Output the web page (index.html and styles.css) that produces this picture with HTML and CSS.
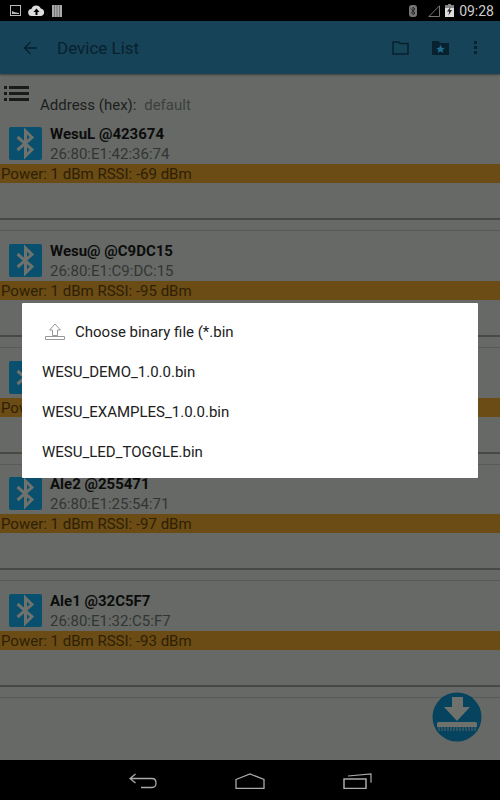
FILE: index.html
```html
<!DOCTYPE html>
<html lang="en">

<head>
    <meta name="viewport" content="width=device-width, initial-scale=1">
    <meta charset="utf-8">
    <link rel="stylesheet" href="styles.css">
</head>

<body>
    <div class="screen">
        <div class="statusbar">
            <div class="status-left">
                <svg width="11" height="12" viewBox="0 0 11 12"><rect x="0.5" y="0.5" width="10" height="10" fill="none" stroke="#bbb"/><path d="M2 9V6l2 1 2 .5 3 .5v1z" fill="#bbb"/></svg>
                <svg width="17" height="12" viewBox="0 0 17 12"><path d="M4 11a3.500 3.500 0 0 1-.6-7A5 5 0 0 1 12.800 3.500 3.800 3.800 0 0 1 13 11z" fill="#ddd"/><path d="M8.500 3.500 5.500 7H7.500V10H9.500V7H11.500z" fill="#000"/></svg>
                <svg width="10" height="12" viewBox="0 0 10 12"><path d="M0 0h10v12H0z" fill="#aaa"/><path d="M2.500 0v12M5 0v12M7.500 0v12" stroke="#666" stroke-width=".8"/></svg>
            </div>
            <div class="status-right">
                <svg width="8" height="12" viewBox="0 0 8 12"><rect width="8" height="12" rx="3" fill="#777"/><path d="M1.800 3.500 6 8 4 10V2L6 4 1.800 8.500" fill="none" stroke="#222" stroke-width=".9"/></svg>
                <svg class="signal" width="12" height="12" viewBox="0 0 12 12"><path d="M11.500 .8V11.500H.8z" fill="none" stroke="#777"/></svg>
                <svg width="9" height="13" viewBox="0 0 9 13"><path d="M3 0h3v1.500h3V13H0V1.500h3z" fill="#ddd"/><path d="M3 0h3v1.500h3V4H0V1.500h3z" fill="#888"/><path d="M5.500 3 2 7.500h2.200L3.500 11.500 7 6H4.800z" fill="#222"/></svg>
                <span class="clock">09:28</span>
            </div>
        </div>

        <div class="toolbar">
            <svg class="back" width="14" height="14" viewBox="0 0 14 14"><path d="M14 7H1.500M7.500 1 1.500 7l6 6" fill="none" stroke="#08212e" stroke-width="1.400"/></svg>
            <span class="title">Device List</span>
            <svg class="action" width="17" height="14" viewBox="0 0 17 14"><path d="M1 1h5.500l1.500 1.500h8V13H1z" fill="none" stroke="#08212e" stroke-width="1.500"/></svg>
            <svg class="action" width="17" height="14" viewBox="0 0 17 14"><path d="M0 0h6.500l2 2H17v12H0z" fill="#08212e"/><path d="M8.500 3.800 9.800 6.700l3 .2-2.300 2 .8 3-2.800-1.600-2.800 1.600.8-3-2.300-2 3-.2z" fill="#1d6a8c"/></svg>
            <div class="overflow"><i></i><i></i><i></i></div>
        </div>

        <div class="content">
            <div class="filter">
                <div class="list-icon">
                    <div><i></i><b></b></div>
                    <div><i></i><b></b></div>
                    <div><i></i><b></b></div>
                </div>
                <div class="address">
                    <span class="address-label">Address (hex):</span>
                    <span class="address-value">default</span>
                </div>
            </div>

            <div id="devices"></div>
        </div>

        <svg class="fab" width="50" height="50" viewBox="0 0 50 50">
            <circle cx="25" cy="25" r="24.500" fill="#06435f"/>
            <path d="M20 5h11v10h7L25 29 12 15h8z" fill="#6f716c"/>
            <path d="M5 31.500q0-1.500 1.500-1.500h37q1.500 0 1.500 1.500v3.500H5z" fill="#6f716c"/>
            <path d="M7 35v4M10 35v4M13 35v4M16 35v4M19 35v4M22 35v4M25 35v4M28 35v4M31 35v4M34 35v4M37 35v4M40 35v4M43 35v4" stroke="#6f716c" stroke-width=".8"/>
        </svg>

        <div class="dialog">
            <div class="dialog-head">
                <svg width="20" height="17" viewBox="0 0 20 17"><path d="M10 1 4.500 7H7.500V12.500H12.500V7H15.500z" fill="none" stroke="#999"/><path d="M.5 13.500h19v3H.5z" fill="none" stroke="#999"/></svg>
                <span>Choose binary file (*.bin</span>
            </div>
            <div class="file">WESU_DEMO_1.0.0.bin</div>
            <div class="file">WESU_EXAMPLES_1.0.0.bin</div>
            <div class="file">WESU_LED_TOGGLE.bin</div>
        </div>

        <div class="navbar">
            <svg width="28" height="16" viewBox="0 0 28 16"><path d="M6.500 1 1 5.500 6.500 10M1 5.500h22q4 0 4 4.500t-4 4.500H12" fill="none" stroke="#aaa" stroke-width="1.300"/></svg>
            <svg width="30" height="16" viewBox="0 0 30 16"><path d="M1 6.500 15 1l14 5.500v9H1z" fill="none" stroke="#aaa" stroke-width="1.300"/></svg>
            <svg width="29" height="16" viewBox="0 0 29 16"><path d="M1 6h22v9.500H1z" fill="none" stroke="#aaa" stroke-width="1.500"/><path d="M5 3 28 .8v9" fill="none" stroke="#aaa" stroke-width="1.200"/></svg>
        </div>
    </div>

    <script>
        // third row is almost all behind the dialog, only the start of its bar shows
        const devices = [
            { name: "WesuL @423674", mac: "26:80:E1:42:36:74", signal: "Power: 1 dBm RSSI: -69 dBm" },
            { name: "Wesu@ @C9DC15", mac: "26:80:E1:C9:DC:15", signal: "Power: 1 dBm RSSI: -95 dBm" },
            { name: "", mac: "", signal: "Pow" },
            { name: "Ale2 @255471", mac: "26:80:E1:25:54:71", signal: "Power: 1 dBm RSSI: -97 dBm" },
            { name: "Ale1 @32C5F7", mac: "26:80:E1:32:C5:F7", signal: "Power: 1 dBm RSSI: -93 dBm" }
        ];
        const btIcon = `<svg class="bt" width="33" height="33" viewBox="0 0 33 33"><rect width="33" height="33" rx="2" fill="#09506f"/><path d="M8.500 10 23 22.500 16.500 29V4L23 10.500 8.500 23" fill="none" stroke="#6f716c" stroke-width="3"/></svg>`;
        let html = "";
        devices.forEach(d => {
            html += `<div class="device">
                <div class="device-top">${btIcon}
                    <div class="device-text"><div class="device-name">${d.name}</div><div class="device-mac">${d.mac}</div></div>
                </div>
                <div class="signal-bar">${d.signal}</div>
            </div>`;
        });
        document.querySelector("#devices").innerHTML = html;
    </script>
</body>

</html>
```
FILE: styles.css
```css
* {
    box-sizing: border-box;
}

html,
body {
    margin: 0;
    padding: 0;
}

body {
    font-family: Roboto, "Liberation Sans", sans-serif;
}

.screen {
    position: relative;
    width: 500px;
    height: 800px;
    overflow: hidden;
    display: flex;
    flex-direction: column;
    background: #666966;
}

.statusbar {
    height: 21px;
    flex: none;
    background: #000;
    display: flex;
    justify-content: space-between;
    align-items: center;
    padding: 0 6px 0 10px;
}

.status-left,
.status-right {
    display: flex;
    align-items: center;
}

.status-left {
    gap: 7px;
}

.status-right {
    gap: 5px;
}

.signal {
    margin-left: 6px;
}

.clock {
    color: #ccc;
    font-size: 14px;
}

.toolbar {
    height: 53px;
    flex: none;
    background: #164358;
    display: flex;
    align-items: center;
    padding-left: 23px;
    box-shadow: 0 1px 2px rgba(0, 0, 0, .4);
    position: relative;
}

.title {
    font-size: 17px;
    color: #08212e;
    margin-left: 20px;
    width: 335px;
}

.back {
    flex: none;
}

.action {
    flex: none;
    margin-right: 23px;
}

.overflow {
    display: flex;
    flex-direction: column;
    gap: 2px;
    margin-left: 2px;
}

.overflow i {
    width: 3px;
    height: 3px;
    background: #08212e;
    display: block;
}

.content {
    flex: 1;
    min-height: 0;
    overflow: hidden;
}

.filter {
    height: 43px;
    display: flex;
    padding: 12px 0 0 4px;
}

.list-icon {
    display: flex;
    flex-direction: column;
    gap: 3px;
}

.list-icon div {
    display: flex;
    gap: 2px;
}

.list-icon i {
    width: 3px;
    height: 3px;
    background: #1a1a1a;
}

.list-icon b {
    width: 20px;
    height: 3px;
    background: #1a1a1a;
}

.address {
    margin: 10px 0 0 11px;
    font-size: 15px;
}

.address-label {
    color: #1e1e1e;
}

.address-value {
    color: #3d3f3d;
    margin-left: 4px;
}

.device {
    height: 116.75px;
    padding: 10px 0 0;
    position: relative;
}

.device::before {
    content: "";
    position: absolute;
    left: 0;
    right: 0;
    top: 113px;
    height: 1px;
    background: #575a57;
}

.device::after {
    content: "";
    position: absolute;
    left: 0;
    right: 0;
    top: 101px;
    height: 2px;
    background: #474945;
}

.device-top {
    display: flex;
    padding-left: 9px;
    height: 37px;
}

.bt {
    flex: none;
}

.device-text {
    margin: -1px 0 0 8px;
}

.device-name {
    font-size: 15px;
    font-weight: 700;
    color: #0c0c0c;
    line-height: 17px;
}

.device-mac {
    font-size: 15px;
    color: #333533;
    line-height: 17px;
    margin-top: 3px;
}

.signal-bar {
    height: 19px;
    background: #6b4c14;
    color: #2e1f06;
    font-size: 15px;
    line-height: 21px;
    padding-left: 1px;
}

.fab {
    position: absolute;
    left: 432px;
    top: 692px;
}

.dialog {
    position: absolute;
    left: 22px;
    top: 303px;
    width: 456px;
    height: 175px;
    background: #fff;
    border-radius: 1px;
    color: #212121;
    font-size: 15px;
}

.dialog-head {
    height: 49px;
    display: flex;
    align-items: center;
    padding: 8px 0 0 23px;
    gap: 10px;
}

.file {
    height: 40px;
    line-height: 40px;
    padding-left: 20px;
}

.navbar {
    position: absolute;
    left: 0;
    right: 0;
    bottom: 0;
    height: 40px;
    background: #000;
    display: flex;
    align-items: center;
    justify-content: center;
    gap: 78px;
    padding-top: 2px;
}
```
